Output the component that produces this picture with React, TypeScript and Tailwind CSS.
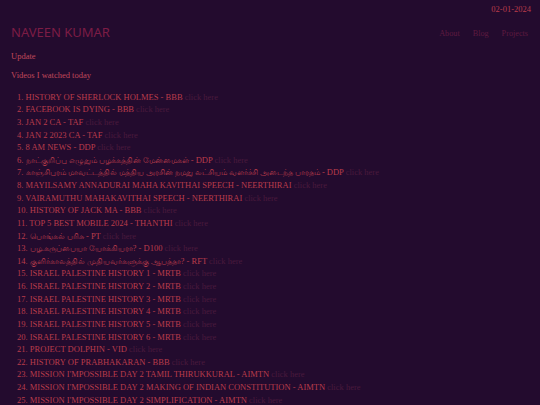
import React from "react";

const items: [string, string, boolean][] = [
  ["HISTORY OF SHERLOCK HOLMES", "BBB", false],
  ["FACEBOOK IS DYING", "BBB", false],
  ["JAN 2 CA", "TAF", false],
  ["JAN 2 2023 CA", "TAF", false],
  ["8 AM NEWS", "DDP", false],
  ["நாட்குறிப்பு எழுதும் பழக்கத்தின் மேன்மைகள்", "DDP", true],
  ["காஞ்சிபுரம் மாவட்டத்தில் மத்திய அரசின் நமது லட்சியம் வளர்ச்சி அடைந்த பாரதம்", "DDP", true],
  ["MAYILSAMY ANNADURAI MAHA KAVITHAI SPEECH", "NEERTHIRAI", false],
  ["VAIRAMUTHU MAHAKAVITHAI SPEECH", "NEERTHIRAI", false],
  ["HISTORY OF JACK MA", "BBB", false],
  ["TOP 5 BEST MOBILE 2024", "THANTHI", false],
  ["பொங்கல் பரிசு", "PT", true],
  ["பழ.கருப்பையா யோக்கியரா?", "D100", true],
  ["குளிர்காலத்தில் முதியவர்களுக்கு ஆபத்தா?", "RFT", true],
  ["ISRAEL PALESTINE HISTORY 1", "MRTB", false],
  ["ISRAEL PALESTINE HISTORY 2", "MRTB", false],
  ["ISRAEL PALESTINE HISTORY 3", "MRTB", false],
  ["ISRAEL PALESTINE HISTORY 4", "MRTB", false],
  ["ISRAEL PALESTINE HISTORY 5", "MRTB", false],
  ["ISRAEL PALESTINE HISTORY 6", "MRTB", false],
  ["PROJECT DOLPHIN", "VID", false],
  ["HISTORY OF PRABHAKARAN", "BBB", false],
  ["MISSION I'MPOSSIBLE DAY 2 TAMIL THIRUKKURAL", "AIMTN", false],
  ["MISSION I'MPOSSIBLE DAY 2 MAKING OF INDIAN CONSTITUTION", "AIMTN", false],
  ["MISSION I'MPOSSIBLE DAY 2 SIMPLIFICATION", "AIMTN", false],
];

export default function App() {
  return (
    <div
      className="min-h-screen w-full bg-[#230b2e] text-[#b93c4b] overflow-hidden"
      style={{ fontFamily: '"Liberation Serif", "Noto Sans CJK SC", serif' }}
    >
      <div className="flex justify-end pr-[9px] pt-[3px] text-[8.5px] leading-[12px]">
        02-01-2024
      </div>
      <div className="flex items-center justify-between pl-[11px] pr-[12px] pt-[9px]">
        <div
          className="text-[13px] leading-[16px] text-[#7c1c45]"
          style={{ fontFamily: '"Noto Sans", sans-serif' }}
        >
          NAVEEN KUMAR
        </div>
        <nav className="flex gap-[13px] text-[8.2px] leading-[12px] text-[#5e1a40] pt-[3px]">
          <a>About</a>
          <a>Blog</a>
          <a>Projects</a>
        </nav>
      </div>
      <div className="pl-[11px] pt-[10px] text-[8.5px] leading-[12px] text-[#c0485a]">Update</div>
      <div className="pl-[11px] pt-[7px] text-[8.5px] leading-[12px] text-[#c0485a]">
        Videos I watched today
      </div>
      <ol className="pl-[17px] pt-[9.7px] text-[8.5px] leading-[12.625px]">
        {items.map(([t, s, ta], i) => (
          <li key={i} className="whitespace-nowrap h-[12.625px]">
            {i + 1}. {ta ? <span className="text-[8.15px] leading-none">{t}</span> : t} - {s}{" "}
            <span className="text-[#4a1a3d]">click here</span>
          </li>
        ))}
      </ol>
    </div>
  );
}
